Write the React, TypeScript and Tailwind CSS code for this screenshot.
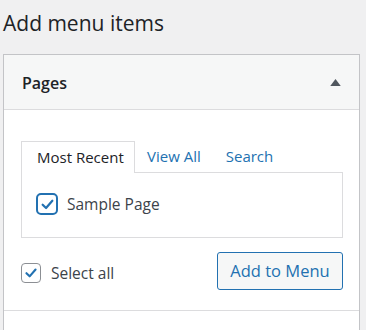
import React from "react";

function CheckIcon({ className }: { className?: string }) {
  return (
    <svg viewBox="0 0 20 20" className={className} fill="none">
      <path d="M4.3 10.2 L8.3 14.2 L15.7 5.6" stroke="#2271b1" strokeWidth="2.6" strokeLinecap="round" strokeLinejoin="round" />
    </svg>
  );
}

export default function App() {
  return (
    <div className="w-[366px] h-[330px] bg-[#f0f0f1] overflow-hidden font-['Open_Sans',sans-serif] text-[#1d2327]">
      <h2 className="pl-[3px] pt-[8px] h-[54px] text-[21px] leading-[30px] font-normal text-[#1d2327]">Add menu items</h2>
      <div className="ml-[3px] w-[357px] h-[300px] border border-[#c3c4c7] bg-white">
        <div className="h-[55px] bg-[#f6f7f7] border-b border-[#dcdcde] flex items-center justify-between pl-[18px] pr-[18px]">
          <span className="text-[16px] font-semibold leading-none pt-[2px]">Pages</span>
          <svg viewBox="0 0 12 8" className="w-[11px] h-[7px]">
            <path d="M6 0 L12 8 L0 8 Z" fill="#50575e" />
          </svg>
        </div>
        <div className="pl-[17px] pr-[16px] pt-[31px]">
          <div className="flex items-end h-[31px] relative z-10">
            <div className="w-[114px] h-[32px] border border-b-0 border-[#dcdcde] bg-white pl-[15px] pt-[5px] text-[15px] leading-[20px] text-[#1d2327] -mb-px">
              Most Recent
            </div>
            <div className="pl-[12px] h-[31px] pt-[5px] text-[15px] leading-[20px] text-[#2271b1]">View All</div>
            <div className="pl-[25px] h-[31px] pt-[5px] text-[15px] leading-[20px] text-[#2271b1]">Search</div>
          </div>
          <div className="w-[322px] h-[66px] border border-[#dcdcde] pt-[20px] pl-[14px] flex items-start">
            <div className="w-[22px] h-[22px] rounded-[5px] border-2 border-[#2271b1] flex items-center justify-center">
              <CheckIcon className="w-[17px] h-[17px]" />
            </div>
            <span className="ml-[9px] text-[15.5px] leading-[22px] text-[#3c434a]">Sample Page</span>
          </div>
          <div className="flex items-start justify-between mt-[14px] w-[322px]">
            <div className="flex items-center mt-[11px]">
              <div className="w-[20px] h-[20px] rounded-[4px] border border-[#8c8f94] flex items-center justify-center">
                <CheckIcon className="w-[16px] h-[16px]" />
              </div>
              <span className="ml-[10px] text-[15.5px] leading-[20px] text-[#3c434a]">Select all</span>
            </div>
            <div className="w-[126px] h-[38px] rounded-[3px] border border-[#2271b1] bg-[#f6f7f7] text-[#2271b1] text-[16.5px] flex items-center justify-center">
              Add to Menu
            </div>
          </div>
          <div className="mt-[20px] -ml-[17px] w-[355px] border-t border-[#dcdcde]"></div>
        </div>
      </div>
    </div>
  );
}
